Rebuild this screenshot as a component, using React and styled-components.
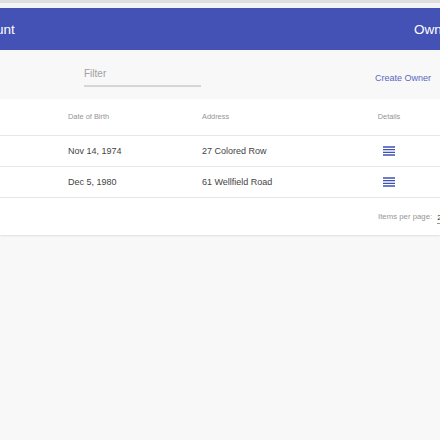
import styled, { createGlobalStyle } from 'styled-components';

const GlobalStyle = createGlobalStyle`
  html, body {
    margin: 0;
    background: #f8f8f8;
    font-family: "Liberation Sans", Arial, sans-serif;
    overflow: hidden;
  }
`;

const owners = [
  { id: 1, dateOfBirth: 'Nov 14, 1974', address: '27 Colored Row' },
  { id: 2, dateOfBirth: 'Dec 5, 1980', address: '61 Wellfield Road' },
];

function ReorderIcon() {
  return (
    <svg width="16" height="16" viewBox="0 0 24 24" fill="#3f51b5">
      <path d="M3 15h18v-2H3v2zm0 4h18v-2H3v2zm0-8h18V9H3v2zm0-6v2h18V5H3z" />
    </svg>
  );
}

export default function App() {
  return (
    <Page>
      <GlobalStyle />
      <TopStrip />
      <Toolbar>
        <Brand>Account</Brand>
        <NavLink>Owner Actions</NavLink>
      </Toolbar>
      <FilterBar>
        <FilterField>
          <FilterLabel>Filter</FilterLabel>
        </FilterField>
        <CreateLink>Create Owner</CreateLink>
      </FilterBar>
      <Card>
        <Row header>
          <Cell />
          <HeaderCell>Date of Birth</HeaderCell>
          <HeaderCell>Address</HeaderCell>
          <HeaderCell center>Details</HeaderCell>
        </Row>
        {owners.map(owner => (
          <Row key={owner.id}>
            <Cell />
            <Cell>{owner.dateOfBirth}</Cell>
            <Cell>{owner.address}</Cell>
            <Cell center>
              <ReorderIcon />
            </Cell>
          </Row>
        ))}
        <Paginator>
          <span>Items per page:</span>
          <PageSize>25</PageSize>
        </Paginator>
      </Card>
    </Page>
  );
}

const Page = styled.div`
  width: 440px;
  height: 440px;
  overflow: hidden;
`;

const TopStrip = styled.div`
  height: 5px;
  border-top: 3px solid #dedede;
  background: #f4f4f4;
`;

const Toolbar = styled.header`
  height: 42px;
  background: #4352b4;
  color: #fff;
  display: flex;
  align-items: center;
  justify-content: space-between;
  font-size: 13.5px;
  white-space: nowrap;
  overflow: hidden;
`;

const Brand = styled.span`
  margin-left: -34px;
  margin-top: 1px;
`;

const NavLink = styled.span`
  margin-right: -61px;
  margin-top: 1px;
`;

const FilterBar = styled.div`
  height: 49px;
  display: flex;
  align-items: center;
  padding: 0 9px 0 84px;
`;

const FilterField = styled.div`
  width: 117px;
  padding-bottom: 4px;
  border-bottom: 2px solid #d6d6d6;
  margin-top: 1px;
`;

const FilterLabel = styled.span`
  font-size: 10px;
  color: #a0a0a0;
`;

const CreateLink = styled.a`
  margin-left: auto;
  margin-top: 7px;
  font-size: 9px;
  color: #5867c2;
`;

const Card = styled.section`
  background: #fff;
  box-shadow: 0 1px 2px rgba(0, 0, 0, 0.1);
`;

const Row = styled.div`
  display: grid;
  grid-template-columns: 68px 134px 1fr 50px;
  padding-right: 26px;
  align-items: center;
  height: ${props => (props.header ? '36px' : '30px')};
  border-bottom: 1px solid #e6e6e6;
`;

const Cell = styled.div`
  font-size: 9px;
  color: #444;
  display: flex;
  justify-content: ${props => (props.center ? 'center' : 'flex-start')};
`;

const HeaderCell = styled(Cell)`
  font-size: 7.4px;
  color: #959595;
  margin-top: -2px;
`;

const Paginator = styled.div`
  height: 37px;
  display: flex;
  align-items: center;
  gap: 5px;
  padding-left: 378px;
  font-size: 7.8px;
  color: #959595;
  white-space: nowrap;
`;

const PageSize = styled.span`
  color: #333;
  padding-bottom: 1px;
  border-bottom: 1px solid #999;
  margin-top: 4px;
`;
